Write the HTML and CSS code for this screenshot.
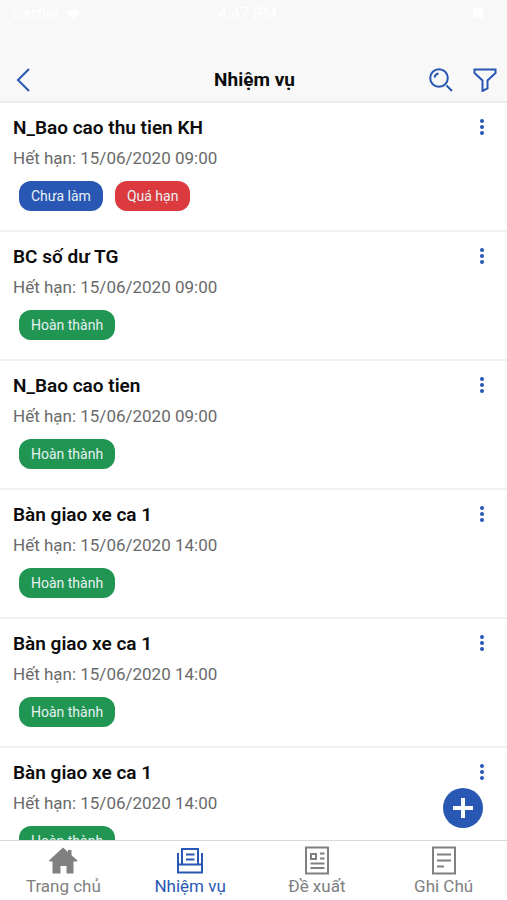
FILE: index.html
```html
<!DOCTYPE html>
<html lang="vi">
<head>
    <meta charset="UTF-8">
    <meta name="viewport" content="width=device-width, initial-scale=1.0">
    <title>Nhiệm vụ</title>
    <link rel="stylesheet" href="styles.css">
</head>
<body>
    <header>
        <div class="status-bar">
            <span class="carrier">Carrier
                <svg width="14" height="10" viewBox="0 0 14 10"><path d="M0 3a10 10 0 0 1 14 0L7 10z" fill="currentColor"/></svg>
            </span>
            <span>4:47 PM</span>
            <span class="battery"></span>
        </div>
        <div class="title-bar">
            <button class="icon-button" aria-label="Quay lại">
                <svg width="24" height="24" viewBox="0 0 24 24"><path d="M17 1L6 12l11 11"/></svg>
            </button>
            <h1>Nhiệm vụ</h1>
            <div class="actions">
                <button class="icon-button" aria-label="Tìm kiếm">
                    <svg width="24" height="24" viewBox="0 0 24 24"><circle cx="10" cy="10" r="8.8"/><path d="M5.5 9.5a5 5 0 0 1 4-4M17.5 17.5l5.5 5.5"/></svg>
                </button>
                <button class="icon-button" aria-label="Lọc">
                    <svg width="24" height="24" viewBox="0 0 24 24"><path d="M1.5 1.5h21v3.500L14.500 12.500v8L9.500 23V12.500L1.500 5z"/></svg>
                </button>
            </div>
        </div>
    </header>

    <main>
        <ul class="task-list">
            <li class="task">
                <div class="task-info">
                    <h2>N_Bao cao thu tien KH</h2>
                    <p>Hết hạn: 15/06/2020 09:00</p>
                    <div class="badges">
                        <span class="badge todo">Chưa làm</span>
                        <span class="badge late">Quá hạn</span>
                    </div>
                </div>
                <button class="menu" aria-label="Tùy chọn"><i></i><i></i><i></i></button>
            </li>
            <li class="task">
                <div class="task-info">
                    <h2>BC số dư TG</h2>
                    <p>Hết hạn: 15/06/2020 09:00</p>
                    <div class="badges"><span class="badge done">Hoàn thành</span></div>
                </div>
                <button class="menu" aria-label="Tùy chọn"><i></i><i></i><i></i></button>
            </li>
            <li class="task">
                <div class="task-info">
                    <h2>N_Bao cao tien</h2>
                    <p>Hết hạn: 15/06/2020 09:00</p>
                    <div class="badges"><span class="badge done">Hoàn thành</span></div>
                </div>
                <button class="menu" aria-label="Tùy chọn"><i></i><i></i><i></i></button>
            </li>
            <li class="task">
                <div class="task-info">
                    <h2>Bàn giao xe ca 1</h2>
                    <p>Hết hạn: 15/06/2020 14:00</p>
                    <div class="badges"><span class="badge done">Hoàn thành</span></div>
                </div>
                <button class="menu" aria-label="Tùy chọn"><i></i><i></i><i></i></button>
            </li>
            <li class="task">
                <div class="task-info">
                    <h2>Bàn giao xe ca 1</h2>
                    <p>Hết hạn: 15/06/2020 14:00</p>
                    <div class="badges"><span class="badge done">Hoàn thành</span></div>
                </div>
                <button class="menu" aria-label="Tùy chọn"><i></i><i></i><i></i></button>
            </li>
            <li class="task">
                <div class="task-info">
                    <h2>Bàn giao xe ca 1</h2>
                    <p>Hết hạn: 15/06/2020 14:00</p>
                    <div class="badges"><span class="badge done">Hoàn thành</span></div>
                </div>
                <button class="menu" aria-label="Tùy chọn"><i></i><i></i><i></i></button>
            </li>
        </ul>
        <button class="add" aria-label="Thêm">
            <svg width="20" height="20" viewBox="0 0 20 20"><path d="M10 0v20M0 10h20"/></svg>
        </button>
    </main>

    <nav>
        <a href="#">
            <svg width="30" height="30" viewBox="0 0 30 30"><path d="M15 2.500l5 4.500V5h3.500v5.200l6 5.300-.5 1h-3.500V28.500h-7V21h-6v7.500h-8v-12H1.500l-.5-1z" fill="currentColor" stroke="none"/></svg>
            Trang chủ
        </a>
        <a href="#" class="active">
            <svg width="30" height="30" viewBox="0 0 30 30"><path d="M7 19V4h16v15M3 8v19.500h24V8M3 19.500h24M11 9.500h8.500M11 14.500h8.500"/></svg>
            Nhiệm vụ
        </a>
        <a href="#">
            <svg width="30" height="30" viewBox="0 0 30 30"><path d="M4 2.500h22v26H4z"/><path d="M9 9h5v5H9zM18 8.500h4.500M18 13.500h4.500M8.500 18.500h14M8.500 23h14"/></svg>
            Đề xuất
        </a>
        <a href="#">
            <svg width="30" height="30" viewBox="0 0 30 30"><path d="M4 2.500h22v26H4z"/><path d="M8 9.500h14M8 15.500h14M8 21.500h7"/></svg>
            Ghi Chú
        </a>
    </nav>
</body>
</html>
```

FILE: styles.css
```css
:root {
    --blue: #2957b4;
    --red: #db3b3f;
    --green: #219653;
    --gray: #808080;
}

* {
    box-sizing: border-box;
}

body {
    margin: 0;
    height: 100vh;
    display: flex;
    flex-direction: column;
    font-family: Roboto, "Liberation Sans", sans-serif;
    background-color: #fff;
    color: #0c0c0c;
}

button {
    padding: 0;
    border: none;
    background: none;
    color: var(--blue);
    cursor: pointer;
}

svg {
    display: block;
    fill: none;
    stroke: currentColor;
    stroke-width: 2;
}

header {
    background-color: #f8f8f8;
    border-bottom: 2px solid #ececec;
}

.status-bar {
    display: grid;
    grid-template-columns: 1fr auto 1fr;
    height: 58px;
    padding: 5px 24px 0 12px;
    font-size: 16px;
    line-height: 18px;
    color: #fff;
}

.carrier {
    display: flex;
    align-items: center;
    gap: 6px;
}

.carrier svg {
    stroke: none;
}

.status-bar span {
    height: 18px;
}

.status-bar .battery {
    justify-self: end;
    align-self: start;
    width: 10px;
    height: 10px;
    margin-top: 3px;
    border-radius: 2px;
    background-color: #fff;
}

.title-bar {
    display: grid;
    grid-template-columns: 1fr auto 1fr;
    align-items: center;
    height: 43px;
    padding: 0 10px 0 12px;
}

h1 {
    margin: 0;
    font-size: 19px;
    line-height: 24px;
    font-weight: 700;
}

.icon-button {
    width: 24px;
    height: 24px;
}

.actions {
    display: flex;
    justify-content: flex-end;
    gap: 20px;
}

main {
    position: relative;
    flex: 1;
    min-height: 0;
    overflow: hidden;
}

.task-list {
    height: 100%;
    margin: 0;
    padding: 0;
    overflow: hidden;
    list-style: none;
}

.task {
    display: flex;
    justify-content: space-between;
    align-items: flex-start;
    padding: 13px 20px 19px 13px;
    border-bottom: 2px solid #f0f0f0;
}

h2 {
    margin: 0;
    font-size: 19px;
    line-height: 24px;
    font-weight: 600;
}

.task p {
    margin: 6px 0 0;
    font-size: 17px;
    line-height: 24px;
    color: #6a6a6a;
}

.badges {
    display: flex;
    gap: 12px;
    margin: 11px 0 0 6px;
}

.badge {
    padding: 0 12px;
    border-radius: 12px;
    font-size: 14px;
    line-height: 30px;
    color: #e8f0f4;
}

.badge.todo {
    background-color: var(--blue);
}

.badge.late {
    background-color: var(--red);
}

.badge.done {
    background-color: var(--green);
}

.menu {
    display: flex;
    flex-direction: column;
    align-items: center;
    gap: 2px;
    width: 10px;
    margin-top: 3px;
}

.menu i {
    width: 4px;
    height: 4px;
    border-radius: 50%;
    background-color: var(--blue);
}

.add {
    position: absolute;
    right: 24px;
    bottom: 12px;
    display: grid;
    place-items: center;
    width: 40px;
    height: 40px;
    border-radius: 50%;
    background-color: var(--blue);
    color: #fff;
}

.add svg {
    stroke-width: 4;
}

nav {
    display: grid;
    grid-template-columns: repeat(4, 1fr);
    height: 60px;
    border-top: 1px solid #d8d8d8;
    background-color: #fff;
}

nav a {
    display: flex;
    flex-direction: column;
    align-items: center;
    padding-top: 4px;
    font-size: 17px;
    line-height: 22px;
    color: var(--gray);
    text-decoration: none;
}

nav a.active {
    color: var(--blue);
}
```
